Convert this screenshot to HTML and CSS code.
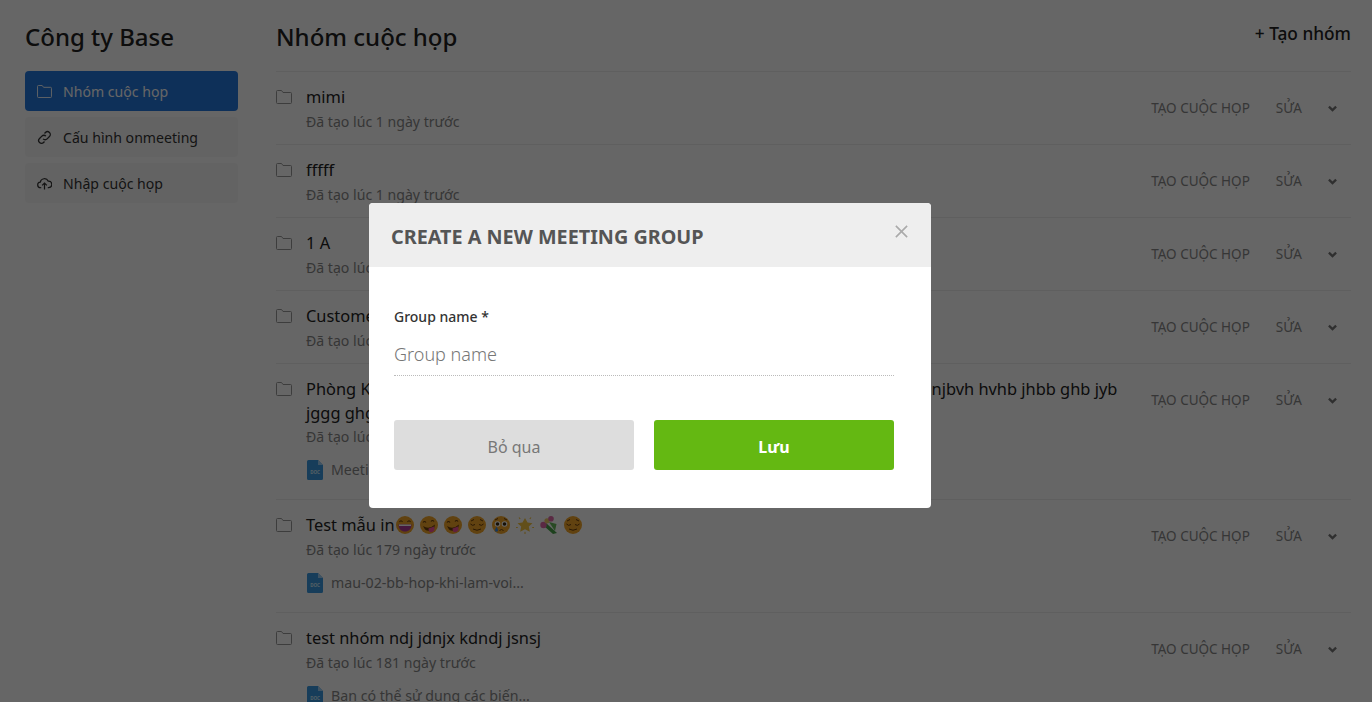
FILE: index.html
```html
<!DOCTYPE html>
<html lang="vi">
<head>
<meta charset="utf-8">
<title>Nhóm cuộc họp</title>
<link rel="stylesheet" href="styles.css">
</head>
<body>
<svg class="defs" width="0" height="0" aria-hidden="true">
  <symbol id="folder" viewBox="0 0 16 14"><path d="M.5 1.500a1 1 0 0 1 1-1h4l1.500 2h7.500a1 1 0 0 1 1 1v9a1 1 0 0 1-1 1h-13a1 1 0 0 1-1-1z" fill="none" stroke="currentColor" stroke-width="1"/></symbol>
  <symbol id="chev" viewBox="0 0 10 7"><path d="M1 1.500L5 5.300l4-3.800" fill="none" stroke="currentColor" stroke-width="2.600"/></symbol>
  <symbol id="face-smile" viewBox="0 0 18 18"><circle cx="9" cy="9" r="9" fill="#f2a52a"/><path d="M2.500 8.500h13c0 4.500-3 7-6.500 7s-6.500-2.500-6.500-7z" fill="#b03a9a"/><path d="M3 8.500h12v1.500H3z" fill="#fff"/><path d="M3.500 6q1.500-2.500 3 0M11.500 6q1.500-2.500 3 0" fill="none" stroke="#6a3f0c" stroke-width="1.100"/></symbol>
  <symbol id="face-tongue" viewBox="0 0 18 18"><circle cx="9" cy="9" r="9" fill="#f2a52a"/><path d="M3 10q6 4 12-1.500l-1 4q-5 4-9 1z" fill="#6a3f0c"/><path d="M8.500 12.500l5.500-2q1.500 4.500-2 5.500t-3.500-3.500z" fill="#f0509a"/><path d="M3 6.500q1.500-2 3 0M11 5.500q1.500-2 3 0" fill="none" stroke="#6a3f0c" stroke-width="1.100"/></symbol>
  <symbol id="face-calm" viewBox="0 0 18 18"><circle cx="9" cy="9" r="9" fill="#f2a52a"/><path d="M2.500 8q2 2.500 4.500.5M11 8.500q2.500 2 4.500-.5M5 13q4 2.500 8 0M3 5l3-1.500M15 5l-3-1.500" fill="none" stroke="#6a3f0c" stroke-width="1"/></symbol>
  <symbol id="face-cry" viewBox="0 0 18 18"><circle cx="9" cy="9" r="9" fill="#f2a52a"/><circle cx="5.500" cy="8" r="2.800" fill="#fff"/><circle cx="12.500" cy="8" r="2.800" fill="#fff"/><circle cx="5.500" cy="8" r="1.800" fill="#3a2a10"/><circle cx="12.500" cy="8" r="1.800" fill="#3a2a10"/><path d="M4.500 10.500l-1.700 3.500a1.700 1.700 0 0 0 3.400 0z" fill="#3d8be0"/><path d="M7.500 14.500q2-2 4 0" fill="none" stroke="#6a3f0c" stroke-width="1"/><path d="M3 4l3-1.500M15 4l-3-1.500" fill="none" stroke="#6a3f0c"/></symbol>
  <symbol id="star" viewBox="0 0 18 18"><path d="M9 2l2.500 4.500 5 .7-3.700 3.400 1 5.200L9 13.300l-4.800 2.500 1-5.200L1.500 7.200l5-.7z" fill="#f5c542"/><path d="M3 1.500l1.200 1.500M15 1.500L13.800 3M0 11.500h1.800M18 11.500h-1.800M9 15.800V18" stroke="#f5c542" stroke-width="1.100"/></symbol>
  <symbol id="bouquet" viewBox="0 0 18 18"><path d="M6 7l11 10-4 1L4 10z" fill="#4aa24a"/><path d="M9 6l6 9 1.500-7z" fill="#67b85a"/><circle cx="3.500" cy="9" r="3.200" fill="#e06aa8"/><circle cx="7" cy="4.800" r="2.600" fill="#eecb6a"/><circle cx="11" cy="2.800" r="2.800" fill="#e06aa8"/></symbol>
</svg>

<div class="app">
  <aside class="sidebar">
    <h2 class="brand">Công ty Base</h2>
    <nav class="nav">
      <a class="nav-item active"><svg class="nav-icon folder-nav"><use href="#folder"/></svg>Nhóm cuộc họp</a>
      <a class="nav-item"><svg class="nav-icon" viewBox="0 0 16 16"><path d="M6.500 9.500a3 3 0 0 0 4.300 0l2.500-2.500a3 3 0 0 0-4.300-4.300L8 3.700M9.500 6.500a3 3 0 0 0-4.300 0L2.700 9a3 3 0 0 0 4.300 4.300L8 12.300" fill="none" stroke="currentColor" stroke-width="1.400"/></svg>Cấu hình onmeeting</a>
      <a class="nav-item"><svg class="nav-icon" viewBox="0 0 16 16"><path d="M4.500 12.500H4a3 3 0 0 1-.5-6A4.500 4.500 0 0 1 12 5.500a3.500 3.500 0 0 1 .5 7H11.500M8 14.500V8M5.500 10L8 7.500 10.500 10" fill="none" stroke="currentColor" stroke-width="1.300"/></svg>Nhập cuộc họp</a>
    </nav>
  </aside>

  <main class="main">
    <header class="main-head">
      <h1 class="title">Nhóm cuộc họp</h1>
      <a class="create">+ Tạo nhóm</a>
    </header>

    <section class="row">
      <svg class="row-folder"><use href="#folder"/></svg>
      <div class="row-body"><div class="row-title">mimi</div><div class="row-sub">Đã tạo lúc 1 ngày trước</div></div>
      <div class="row-actions"><a class="act-create">TẠO CUỘC HỌP</a><a class="act-edit">SỬA</a><svg class="chev"><use href="#chev"/></svg></div>
    </section>
    <section class="row">
      <svg class="row-folder"><use href="#folder"/></svg>
      <div class="row-body"><div class="row-title">fffff</div><div class="row-sub">Đã tạo lúc 1 ngày trước</div></div>
      <div class="row-actions"><a class="act-create">TẠO CUỘC HỌP</a><a class="act-edit">SỬA</a><svg class="chev"><use href="#chev"/></svg></div>
    </section>
    <section class="row">
      <svg class="row-folder"><use href="#folder"/></svg>
      <div class="row-body"><div class="row-title">1 A</div><div class="row-sub">Đã tạo lúc 1 ngày trước</div></div>
      <div class="row-actions"><a class="act-create">TẠO CUỘC HỌP</a><a class="act-edit">SỬA</a><svg class="chev"><use href="#chev"/></svg></div>
    </section>
    <section class="row">
      <svg class="row-folder"><use href="#folder"/></svg>
      <div class="row-body"><div class="row-title">Customer</div><div class="row-sub">Đã tạo lúc 2 ngày trước</div></div>
      <div class="row-actions"><a class="act-create">TẠO CUỘC HỌP</a><a class="act-edit">SỬA</a><svg class="chev"><use href="#chev"/></svg></div>
    </section>
    <section class="row">
      <svg class="row-folder"><use href="#folder"/></svg>
      <div class="row-body">
        <div class="row-title long">Phòng Kế hoạch bvgh jhbvgh jbhvg hbjvh gjhb hvgb jhvb hgvb jhbvg hjbvgh jbhv njbvh hvhb jhbb ghb jyb<br>jggg ghg</div>
        <div class="row-sub">Đã tạo lúc 5 ngày trước</div>
        <div class="file"><svg class="file-icon" viewBox="0 0 16 20"><path d="M1.500 0H11l5 5v13.500a1.500 1.500 0 0 1-1.500 1.500h-13A1.500 1.500 0 0 1 0 18.500v-17A1.500 1.500 0 0 1 1.500 0z" fill="#3a9ae0"/><path d="M11 0l5 5h-5z" fill="#a0d0f5"/><text x="8" y="13.600" text-anchor="middle" font-size="4.500" font-weight="700" fill="#d5ecfb">DOC</text></svg><span class="file-name">Meeting</span></div>
      </div>
      <div class="row-actions"><a class="act-create">TẠO CUỘC HỌP</a><a class="act-edit">SỬA</a><svg class="chev"><use href="#chev"/></svg></div>
    </section>
    <section class="row">
      <svg class="row-folder"><use href="#folder"/></svg>
      <div class="row-body">
        <div class="row-title">Test mẫu in<span class="emojis"><svg class="emoji"><use href="#face-smile"/></svg><svg class="emoji"><use href="#face-tongue"/></svg><svg class="emoji"><use href="#face-tongue"/></svg><svg class="emoji"><use href="#face-calm"/></svg><svg class="emoji"><use href="#face-cry"/></svg><svg class="emoji"><use href="#star"/></svg><svg class="emoji"><use href="#bouquet"/></svg><svg class="emoji"><use href="#face-calm"/></svg></span></div>
        <div class="row-sub">Đã tạo lúc 179 ngày trước</div>
        <div class="file"><svg class="file-icon" viewBox="0 0 16 20"><path d="M1.500 0H11l5 5v13.500a1.500 1.500 0 0 1-1.500 1.500h-13A1.500 1.500 0 0 1 0 18.500v-17A1.500 1.500 0 0 1 1.500 0z" fill="#3a9ae0"/><path d="M11 0l5 5h-5z" fill="#a0d0f5"/><text x="8" y="13.600" text-anchor="middle" font-size="4.500" font-weight="700" fill="#d5ecfb">DOC</text></svg><span class="file-name">mau-02-bb-hop-khi-lam-voi...</span></div>
      </div>
      <div class="row-actions"><a class="act-create">TẠO CUỘC HỌP</a><a class="act-edit">SỬA</a><svg class="chev"><use href="#chev"/></svg></div>
    </section>
    <section class="row">
      <svg class="row-folder"><use href="#folder"/></svg>
      <div class="row-body">
        <div class="row-title">test nhóm ndj jdnjx kdndj jsnsj</div>
        <div class="row-sub">Đã tạo lúc 181 ngày trước</div>
        <div class="file"><svg class="file-icon" viewBox="0 0 16 20"><path d="M1.500 0H11l5 5v13.500a1.500 1.500 0 0 1-1.500 1.500h-13A1.500 1.500 0 0 1 0 18.500v-17A1.500 1.500 0 0 1 1.500 0z" fill="#3a9ae0"/><path d="M11 0l5 5h-5z" fill="#a0d0f5"/><text x="8" y="13.600" text-anchor="middle" font-size="4.500" font-weight="700" fill="#d5ecfb">DOC</text></svg><span class="file-name">Bạn có thể sử dụng các biến...</span></div>
      </div>
      <div class="row-actions"><a class="act-create">TẠO CUỘC HỌP</a><a class="act-edit">SỬA</a><svg class="chev"><use href="#chev"/></svg></div>
    </section>
  </main>
</div>

<div class="overlay"></div>
<div class="modal">
  <div class="modal-head">
    <h3 class="modal-title">CREATE A NEW MEETING GROUP</h3>
    <svg class="modal-close" viewBox="0 0 12 12"><path d="M.8.800l10.400 10.400M11.200.800L.8 11.200" stroke="currentColor" stroke-width="1.500"/></svg>
  </div>
  <div class="modal-body">
    <label class="field-label">Group name *</label>
    <input class="field-input" type="text" placeholder="Group name">
    <div class="modal-actions">
      <button class="btn btn-cancel">Bỏ qua</button>
      <button class="btn btn-save">Lưu</button>
    </div>
  </div>
</div>
</body>
</html>
```
FILE: styles.css
```css
* { box-sizing: border-box; }
html, body { margin: 0; height: 100%; }
body {
  height: 702px;
  overflow: hidden;
  background: #fff;
  color: #222;
  font-family: "Noto Sans", "Open Sans", sans-serif;
}
.defs { position: absolute; }
.app { display: flex; padding-left: 25px; }
.sidebar { width: 213px; flex: none; }
.brand {
  margin: 0;
  height: 71px;
  padding-top: 20px;
  font-size: 24px;
  line-height: 33px;
  font-weight: 500;
  color: #222;
}
.nav { display: flex; flex-direction: column; gap: 6px; }
.nav-item {
  display: flex;
  align-items: center;
  height: 40px;
  padding-left: 12px;
  gap: 11px;
  border-radius: 4px;
  background: #f8f8f8;
  font-size: 14.100px;
  color: #333;
}
.nav-item.active { background: #2478de; color: #fff; }
.nav-icon { width: 15px; height: 15px; flex: none; }
.folder-nav { height: 13px; }
.main { width: 1075px; margin-left: 38px; flex: none; }
.main-head {
  display: flex;
  justify-content: space-between;
  height: 71px;
  border-bottom: 1px solid #eee;
  box-sizing: content-box;
}
.title {
  margin: 20px 0 0;
  font-size: 24px;
  line-height: 33px;
  font-weight: 500;
  color: #222;
}
.create {
  margin-top: 22px;
  font-size: 17.300px;
  line-height: 24px;
  font-weight: 500;
  color: #222;
}
.row {
  display: flex;
  border-bottom: 1px solid #eee;
  padding-bottom: 11px;
}
.row-folder { width: 16px; height: 14px; margin: 18px 14px 0 0; flex: none; color: #999; }
.row-body { flex: 1; min-width: 0; padding-top: 12px; }
.row-title { font-size: 16.400px; line-height: 26px; color: #222; }
.row-title.long { margin: 1px 0 1px; line-height: 23.500px; white-space: nowrap; }
.row-sub { font-size: 14.100px; line-height: 23px; color: #888; }
.file { display: flex; align-items: center; gap: 8px; height: 35px; margin-top: 4px; padding-left: 1px; margin-bottom: 1px; }
.file-icon { width: 16px; height: 20px; flex: none; }
.file-name { font-size: 14.200px; color: #888; }
.emojis { display: inline-flex; gap: 6px; margin-left: 1px; vertical-align: -3px; }
.emoji { width: 18px; height: 18px; flex: none; }
.row-actions {
  display: flex;
  align-items: center;
  align-self: flex-start;
  height: 72px;
  margin-bottom: -11px;
  font-size: 13.500px;
  color: #888;
  flex: none;
  padding-right: 14px;
}
.act-create { margin-left: 34px; }
.act-edit { margin-left: 26px; }
.chev { width: 9px; height: 7px; margin-left: 26px; color: #777; }
.overlay { position: fixed; inset: 0; background: rgba(0, 0, 0, .6); }
.modal {
  position: absolute;
  left: 369px;
  top: 203px;
  width: 562px;
  height: 305px;
  background: #fff;
  border-radius: 4px;
  overflow: hidden;
}
.modal-head {
  position: relative;
  height: 64px;
  background: #eee;
  padding: 20px 22px 0;
}
.modal-title { margin: 0; font-size: 19.800px; line-height: 27px; font-weight: 700; color: #555; }
.modal-close { position: absolute; right: 23px; top: 22px; width: 13px; height: 13px; color: #aaa; }
.modal-body { padding: 40px 37px 0 25px; }
.field-label { display: block; font-size: 14px; line-height: 20px; font-weight: 500; color: #333; }
.field-input {
  display: block;
  width: 100%;
  height: 49px;
  padding: 6px 0 0;
  border: 0;
  border-bottom: 1px dotted #bbb;
  outline: 0;
  font: 300 18px "Noto Sans", sans-serif;
  color: #333;
}
.field-input::placeholder { color: #777; opacity: 1; }
.modal-actions { display: flex; gap: 20px; margin-top: 44px; }
.btn {
  flex: 1;
  height: 50px;
  padding-top: 4px;
  border: 0;
  border-radius: 3px;
  font-family: "Noto Sans", sans-serif;
  font-size: 16px;
}
.btn-cancel { background: #ddd; color: #777; }
.btn-save { background: #64b812; color: #fff; font-weight: 700; }
```
